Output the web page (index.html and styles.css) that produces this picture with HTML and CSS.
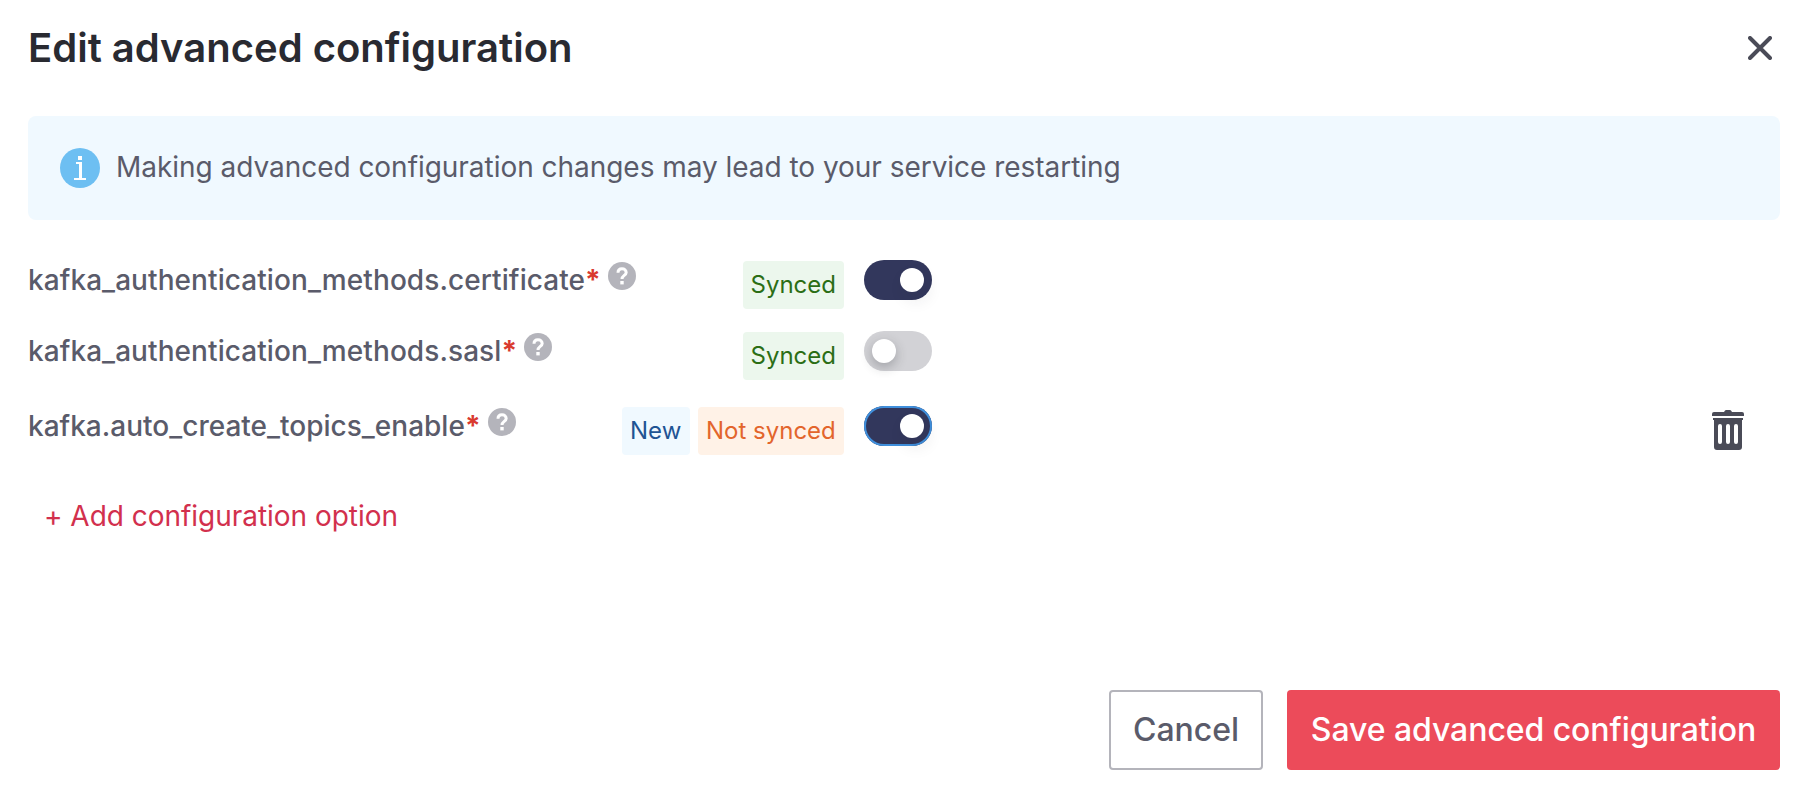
FILE: index.html
```html
<!DOCTYPE html>
<html lang="en">
<head>
<meta charset="utf-8">
<title>Edit advanced configuration</title>
<link rel="stylesheet" href="styles.css">
</head>
<body>
<svg class="defs" width="0" height="0" aria-hidden="true">
  <symbol id="help" viewBox="0 0 28 28">
    <circle cx="14" cy="14" r="14" fill="#b4b4bb"/>
    <path d="M10 10.800C10 8.300 11.500 6.800 14 6.800s4.200 1.500 4.200 3.600c0 2.900-4.200 3.100-4.200 6.500" fill="none" stroke="#fff" stroke-width="3"/>
    <rect x="12.300" y="19" width="3.400" height="3.400" fill="#fff"/>
  </symbol>
</svg>
<main class="dialog">
  <header class="header">
    <h1 class="title">Edit advanced configuration</h1>
    <button class="close" aria-label="Close">
      <svg width="24" height="24" viewBox="0 0 24 24"><path d="M2 2l20 20M22 2L2 22" stroke="#4a4b57" stroke-width="4" stroke-linecap="round"/></svg>
    </button>
  </header>
  <section class="notice">
    <svg width="40" height="40" viewBox="0 0 40 40">
      <circle cx="20" cy="20" r="20" fill="#6dbff2"/>
      <path d="M18 8h4v4h-4zM16 14h6v16h4v2H14v-2h5V16h-3z" fill="#fff"/>
    </svg>
    <p class="notice-text">Making advanced configuration changes may lead to your service restarting</p>
  </section>
  <section class="options">
    <div class="row">
      <div class="name"><span class="label wide">kafka_authentication_methods.certificate<b class="req">*</b></span><svg class="help"><use href="#help"/></svg></div>
      <div class="tags"><span class="tag synced">Synced</span></div>
      <span class="toggle on"><i class="knob"></i></span>
    </div>
    <div class="row">
      <div class="name"><span class="label wide">kafka_authentication_methods.sasl<b class="req">*</b></span><svg class="help"><use href="#help"/></svg></div>
      <div class="tags"><span class="tag synced">Synced</span></div>
      <span class="toggle"><i class="knob"></i></span>
    </div>
    <div class="row last">
      <div class="name"><span class="label">kafka.auto_create_topics_enable<b class="req">*</b></span><svg class="help"><use href="#help"/></svg></div>
      <div class="tags"><span class="tag new">New</span><span class="tag unsynced">Not synced</span></div>
      <span class="toggle on focus"><i class="knob"></i></span>
      <button class="trash" aria-label="Delete">
        <svg width="32" height="40" viewBox="0 0 32 40">
          <path d="M0 6V4q0-2 2-2h10q1-2 2-2h4q1 0 2 2h10q2 0 2 2v2z" fill="#4a4b57"/>
          <path d="M1 8h30v2h-1v27q0 3-3 3H5q-3 0-3-3V10H1z" fill="#4a4b57"/>
          <path d="M8 16v16M16 16v16M24 16v16" stroke="#fff" stroke-width="4" stroke-linecap="round"/>
        </svg>
      </button>
    </div>
  </section>
  <a class="add">+ Add configuration option</a>
  <footer class="footer">
    <button class="btn cancel">Cancel</button>
    <button class="btn save">Save advanced configuration</button>
  </footer>
</main>
</body>
</html>
```
FILE: styles.css
```css
* { box-sizing: border-box; }
body { margin: 0; background: #fff; font-family: Inter, sans-serif; color: #5a5b6a; }
button { border: 0; padding: 0; background: none; font-family: inherit; }
svg { display: block; flex: none; }
.defs { position: absolute; }
.dialog { display: flex; flex-direction: column; height: 798px; padding: 24px 36px 28px 28px; }
.header { display: flex; justify-content: space-between; height: 92px; padding-right: 8px; }
.title { margin: 0; font-size: 40px; line-height: 48px; font-weight: 600; color: #292a31; white-space: nowrap; }
.close { height: 24px; margin-top: 12px; }
.notice { display: flex; align-items: flex-start; gap: 16px; height: 104px; padding: 32px; border-radius: 8px; background: #f0f9ff; }
.notice-text { margin: -1px 0 0; font-size: 28px; line-height: 40px; letter-spacing: -.035px; white-space: nowrap; }
.options { padding-top: 40px; }
.row { display: flex; align-items: flex-start; height: 71px; }
.row.last { margin-top: 4px; height: 90px; }
.name { display: flex; align-items: flex-start; gap: 7px; width: 590px; }
.label { font-size: 28px; line-height: 40px; font-weight: 540; letter-spacing: .01px; white-space: nowrap; }
.label.wide { letter-spacing: .075px; }
.req { color: #d93a2f; font-weight: 700; }
.help { width: 28px; height: 28px; margin-top: 2px; }
.tags { display: flex; justify-content: flex-end; gap: 8px; width: 226px; padding-top: 1px; }
.tag { height: 48px; padding: 0 8px; border-radius: 4px; font-size: 24px; line-height: 48px; white-space: nowrap; }
.synced { background: #ecf7ed; color: #2b6e15; }
.new { width: 68px; background: #f0f9ff; color: #1f5494; }
.unsynced { width: 146px; background: #fff2e7; color: #e3652c; }
.toggle { display: flex; width: 68px; height: 40px; margin-left: 20px; padding: 8px; border-radius: 20px; background: #d2d2d6; }
.on { justify-content: flex-end; background: #32375c; }
.focus { box-shadow: inset 0 0 0 2px #3f8fdc; }
.knob { width: 24px; height: 24px; border-radius: 50%; background: #fff; box-shadow: 0 4px 12px rgba(41, 42, 49, .3); }
.on .knob { box-shadow: 4px 8px 16px rgba(41, 42, 49, .1); }
.trash { margin: 4px 36px 0 auto; }
.add { align-self: flex-start; margin-left: 16px; font-size: 28px; line-height: 40px; letter-spacing: -.03px; color: #d2304d; white-space: nowrap; }
.footer { display: flex; justify-content: flex-end; gap: 24px; margin-top: auto; }
.btn { height: 80px; border-radius: 4px; font-size: 32px; line-height: 40px; font-weight: 500; letter-spacing: -.07px; white-space: nowrap; }
.cancel { width: 154px; border: 2px solid #b4b4bb; color: #5a5b6a; }
.save { width: 493px; background: #ec4b5a; color: #fff; }
```
